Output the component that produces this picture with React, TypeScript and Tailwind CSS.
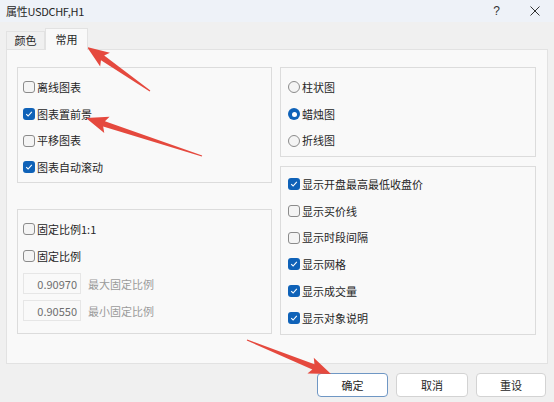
import React from "react";

const font = { fontFamily: '"Noto Sans CJK SC", "Noto Sans", sans-serif' };

function Check({ on }: { on?: boolean }) {
  if (on) {
    return (
      <span className="flex h-[12px] w-[12px] shrink-0 items-center justify-center rounded-[3px] bg-[#0f62b8]">
        <svg width="8" height="8" viewBox="0 0 8 8">
          <path d="M1.2 4.2 L3.1 6 L6.8 1.9" fill="none" stroke="#fff" strokeWidth="1.1" />
        </svg>
      </span>
    );
  }
  return <span className="h-[12px] w-[12px] shrink-0 rounded-[3px] border border-[#8b8b8b] bg-[#f4f4f4]" />;
}

function Radio({ on }: { on?: boolean }) {
  if (on) {
    return (
      <span className="flex h-[12px] w-[12px] shrink-0 items-center justify-center rounded-full bg-[#0f62b8]">
        <span className="h-[5px] w-[5px] rounded-full bg-white" />
      </span>
    );
  }
  return <span className="h-[12px] w-[12px] shrink-0 rounded-full border border-[#8b8b8b] bg-[#f4f4f4]" />;
}

function Item({ label, on, radio }: { label: string; on?: boolean; radio?: boolean }) {
  return (
    <div className="flex h-[26.7px] items-center gap-[2px] text-[11px] text-[#262626]">
      {radio ? <Radio on={on} /> : <Check on={on} />}
      <span>{label}</span>
    </div>
  );
}

function Ratio({ value, label }: { value: string; label: string }) {
  return (
    <div className="flex items-center gap-[7px]">
      <div className="flex h-[21px] w-[58px] items-center justify-end border border-[#e6e6e6] bg-[#f9f9f9] pr-[3px] text-[11px] text-[#6e6e6e]">
        {value}
      </div>
      <span className="text-[11px] text-[#9b9b9b]">{label}</span>
    </div>
  );
}

function arrow(x1: number, y1: number, x2: number, y2: number) {
  const L = Math.hypot(x2 - x1, y2 - y1);
  const dx = (x2 - x1) / L;
  const dy = (y2 - y1) / L;
  const nx = -dy;
  const ny = dx;
  const bx = x2 - dx * 19;
  const by = y2 - dy * 19;
  const p = (x: number, y: number, w: number) => `${x + nx * w},${y + ny * w}`;
  return [
    p(x1, y1, 0.6),
    p(bx, by, 2.8),
    p(bx - dx * 3, by - dy * 3, 8.5),
    `${x2},${y2}`,
    p(bx - dx * 3, by - dy * 3, -8.5),
    p(bx, by, -2.8),
    p(x1, y1, -0.6),
  ].join(" ");
}

export default function App() {
  return (
    <div className="relative flex h-[402px] w-[554px] flex-col overflow-hidden bg-[#f0f0f0]" style={font}>
      {/* title bar */}
      <div className="flex h-[22px] items-center justify-between bg-[#eef2f8] pl-[6px] pr-[14px]">
        <span className="text-[11px] tracking-[-0.3px] text-[#262626]">属性USDCHF,H1</span>
        <div className="flex items-center gap-[30px]">
          <span className="text-[12px] text-[#333]" style={{ fontFamily: '"Liberation Sans", sans-serif' }}>?</span>
          <svg width="10" height="10" viewBox="0 0 10 10">
            <path d="M0.5 0.5 L9.5 9.5 M9.5 0.5 L0.5 9.5" stroke="#333" strokeWidth="1" />
          </svg>
        </div>
      </div>

      {/* tabs */}
      <div className="flex items-end px-[6px] pt-[6px]">
        <div className="flex h-[18px] w-[39px] items-center justify-center border border-b-0 border-[#e2e2e2] bg-[#f0f0f0] text-[11px] text-[#262626]">
          颜色
        </div>
        <div className="relative z-10 -mb-px flex h-[22px] w-[43px] items-start justify-center border border-b-0 border-[#e2e2e2] bg-[#f9f9f9] pt-[2px] text-[11px] text-[#262626]">
          常用
        </div>
      </div>

      {/* panel */}
      <div className="mx-[6px] flex h-[315px] gap-[8px] border border-[#e2e2e2] bg-[#f9f9f9] pl-[10px] pr-[8px] pt-[17px]">
        <div className="flex w-[255px] flex-col gap-[26px]">
          <div className="flex h-[116px] flex-col border border-[#dcdcdc] pl-[5px] pt-[6px]">
            <Item label="离线图表" />
            <Item label="图表置前景" on />
            <Item label="平移图表" />
            <Item label="图表自动滚动" on />
          </div>
          <div className="flex h-[125px] flex-col border border-[#dcdcdc] pl-[5px] pt-[6px]">
            <Item label="固定比例1:1" />
            <Item label="固定比例" />
            <div className="mt-[4px] flex flex-col gap-[6px]">
              <Ratio value="0.90970" label="最大固定比例" />
              <Ratio value="0.90550" label="最小固定比例" />
            </div>
          </div>
        </div>
        <div className="flex w-[256px] flex-col gap-[9px]">
          <div className="flex h-[90px] flex-col border border-[#dcdcdc] pl-[7px] pt-[6px]">
            <Item label="柱状图" radio />
            <Item label="蜡烛图" radio on />
            <Item label="折线图" radio />
          </div>
          <div className="flex h-[169px] flex-col border border-[#dcdcdc] pl-[7px] pt-[4px]">
            <Item label="显示开盘最高最低收盘价" on />
            <Item label="显示买价线" />
            <Item label="显示时段间隔" />
            <Item label="显示网格" on />
            <Item label="显示成交量" on />
            <Item label="显示对象说明" on />
          </div>
        </div>
      </div>

      {/* buttons */}
      <div className="flex justify-end gap-[8px] pr-[8px] pt-[9px]">
        <button className="h-[24px] w-[71px] rounded-[4px] border border-[#6f97c4] bg-white text-[11px] text-[#262626]">确定</button>
        <button className="h-[24px] w-[72px] rounded-[4px] border border-[#d3d3d3] bg-white text-[11px] text-[#262626]">取消</button>
        <button className="h-[24px] w-[70px] rounded-[4px] border border-[#d3d3d3] bg-white text-[11px] text-[#262626]">重设</button>
      </div>

      {/* annotation arrows */}
      <svg className="pointer-events-none absolute left-0 top-0" width="554" height="402">
        <polygon points={arrow(150, 91, 87, 47)} fill="#e5493e" />
        <polygon points={arrow(202, 156, 86, 118)} fill="#e5493e" />
        <polygon points={arrow(247, 340, 331, 374)} fill="#e5493e" />
      </svg>
    </div>
  );
}
